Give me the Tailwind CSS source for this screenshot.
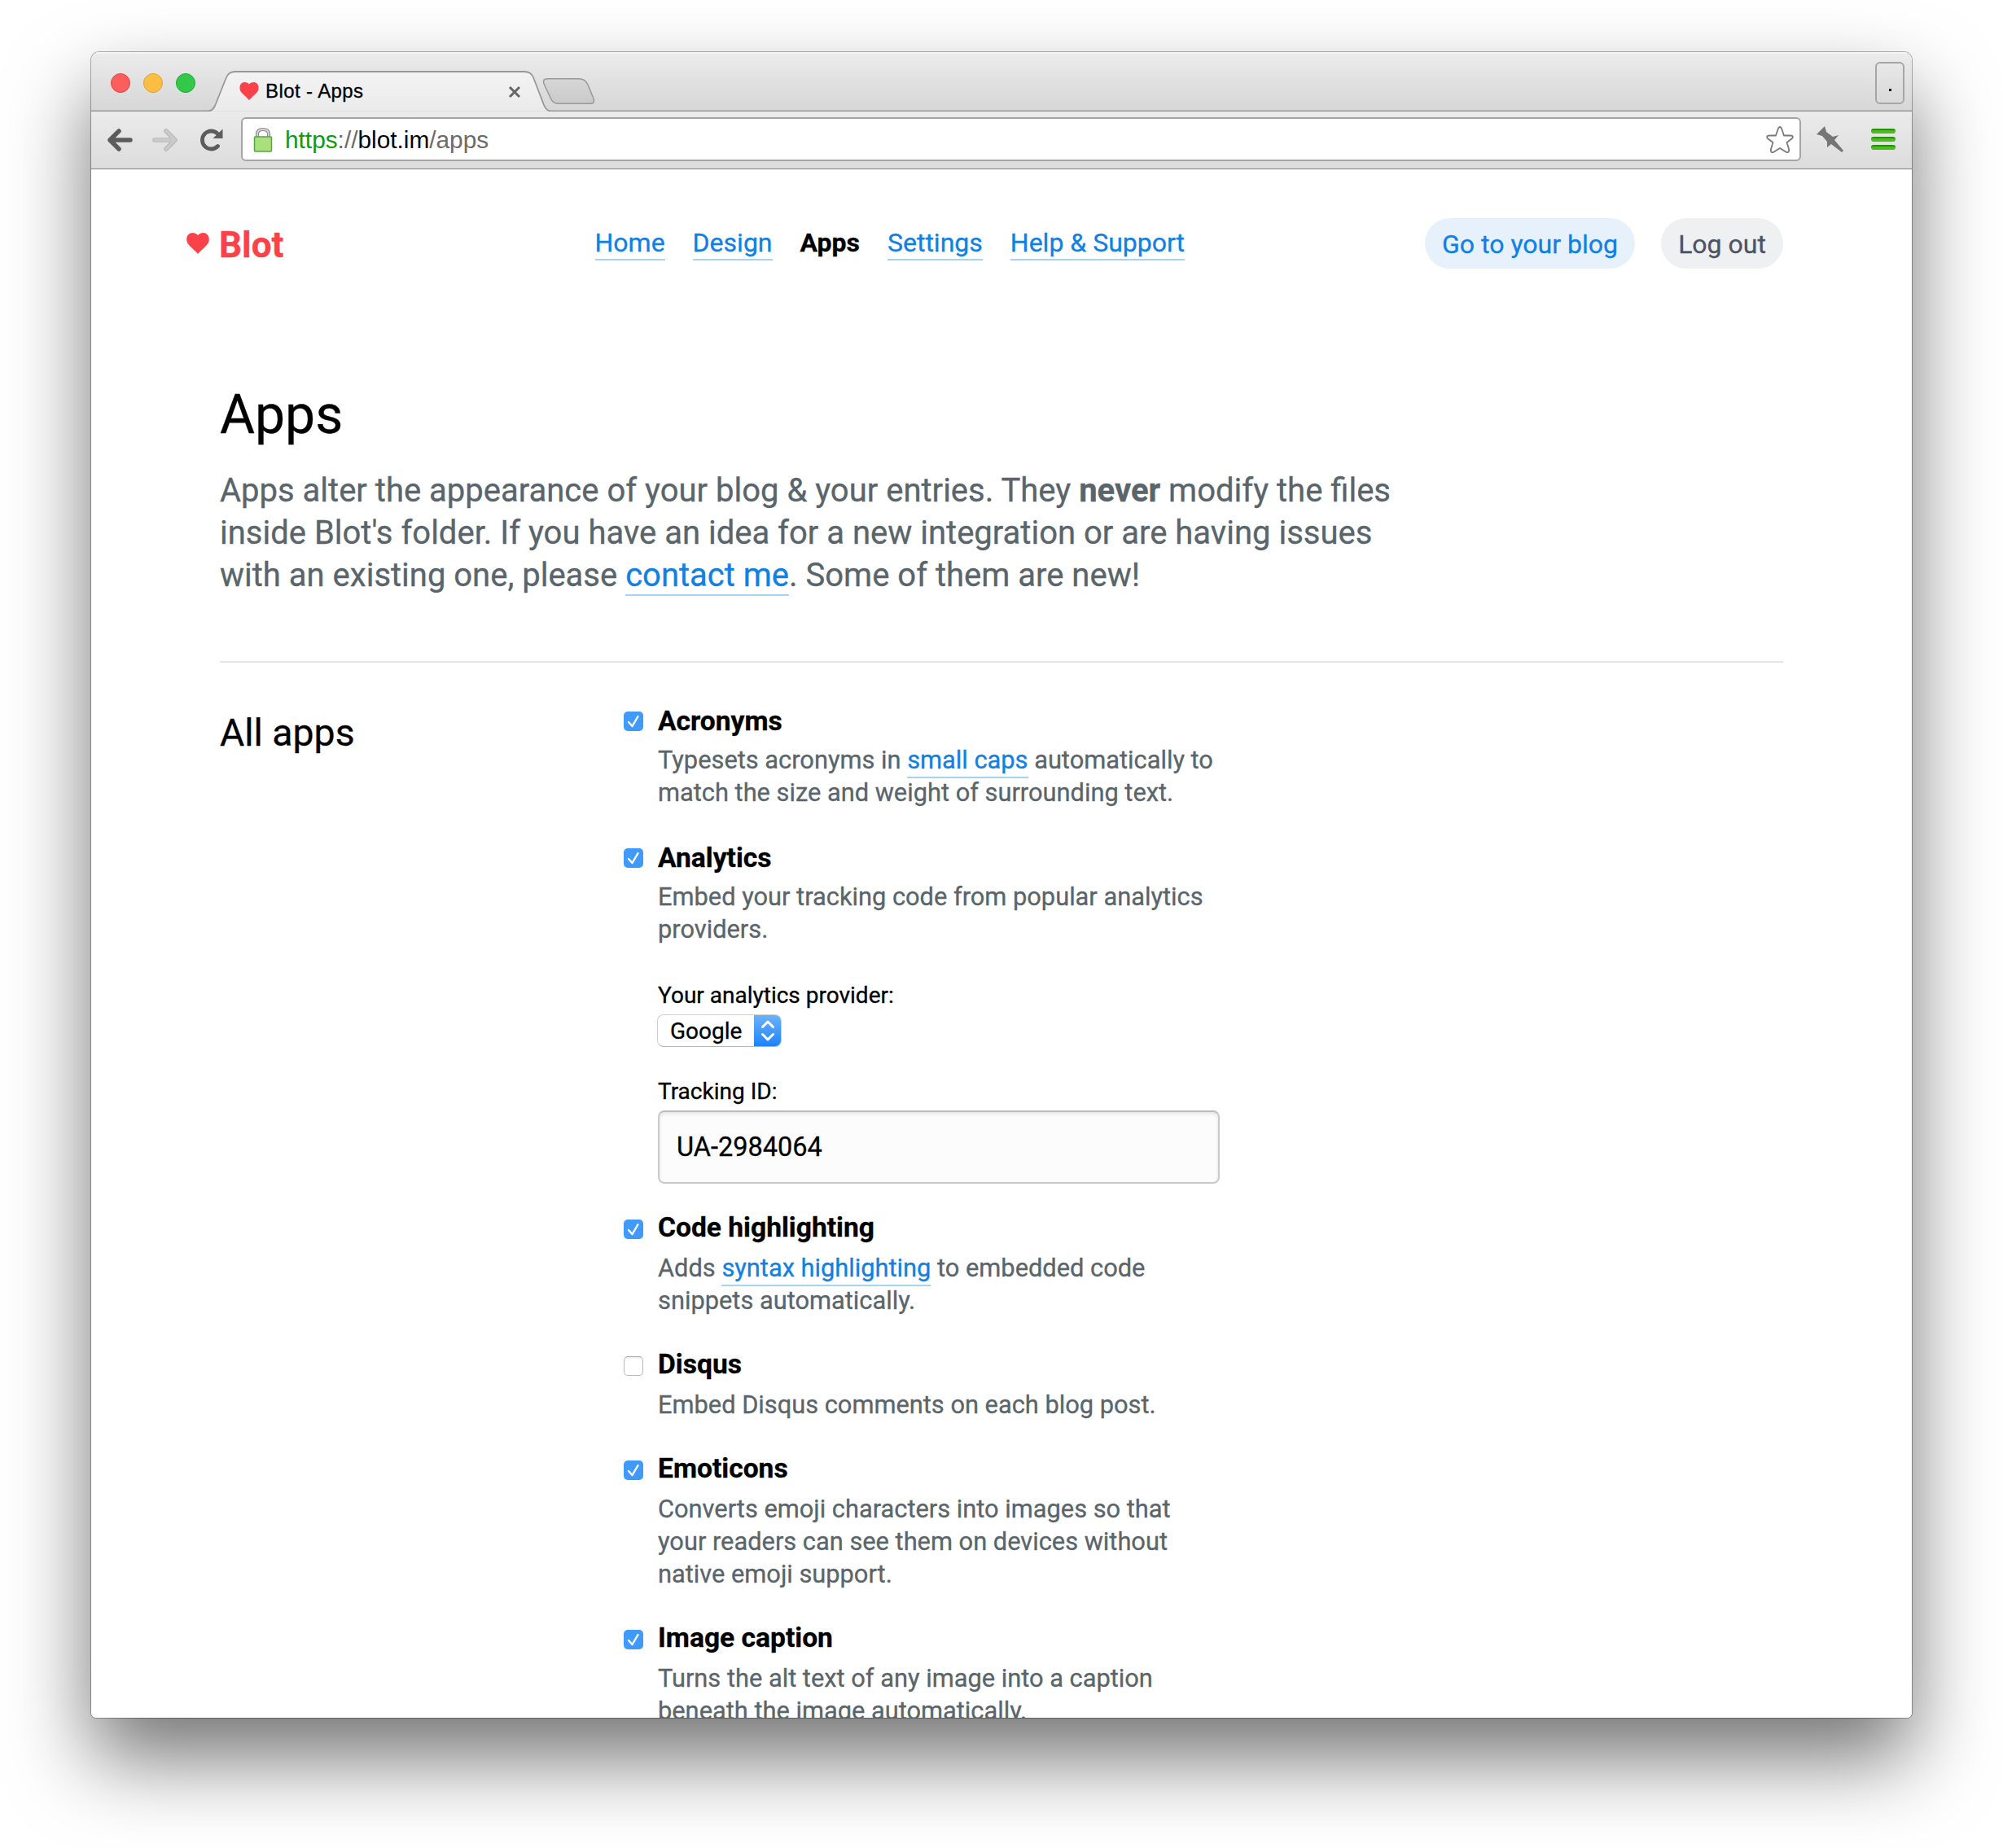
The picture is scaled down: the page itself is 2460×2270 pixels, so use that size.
<!DOCTYPE html>
<html lang="en">
<head>
<meta charset="utf-8">
<title>Blot - Apps</title>
<script src="https://cdn.jsdelivr.net/npm/@tailwindcss/browser@4"></script>
</head>
<body class="w-[2460px] h-[2270px] overflow-hidden bg-white px-28 pt-16 font-[Roboto,sans-serif] text-black">
<svg class="hidden">
  <symbol id="check" viewBox="0 0 24 24"><path d="M6 13 L10.500 18 L17.500 6" fill="none" stroke="#fff" stroke-width="2.400" stroke-linecap="round" stroke-linejoin="round"/></symbol>
  <symbol id="heart" viewBox="0 0 28 26"><path d="M14 26 C12 22.500 1.500 15.500 0.500 10.500 C-0.800 4 3 0 7.500 0 C10.500 0 13 1.500 14 3 C15 1.500 17.500 0 20.500 0 C25 0 28.800 4 27.500 10.500 C26.500 15.500 16 22.500 14 26 Z" fill="#fa4248"/></symbol>
</svg>
<div class="w-[2236px] h-[2046px] rounded-t-[10px] rounded-b-md shadow-[0_0_0_1px_rgba(0,0,0,0.3),0_50px_100px_rgba(0,0,0,0.55)]">
<div class="flex h-full flex-col overflow-hidden rounded-t-[10px] rounded-b-md bg-white">

  <!-- tab strip -->
  <div class="relative flex h-[73px] shrink-0 bg-linear-to-b from-[#ececec] to-[#d6d6d6] shadow-[inset_0_2px_0_#f4f4f4]">
    <svg class="absolute left-0 top-0" width="2236" height="73" viewBox="0 0 2236 73" fill="none">
      <defs><linearGradient id="tab" x1="0" y1="0" x2="0" y2="1"><stop offset="0" stop-color="#f3f3f3"/><stop offset="1" stop-color="#ebebeb"/></linearGradient>
      <linearGradient id="nt" x1="0" y1="0" x2="0" y2="1"><stop offset="0" stop-color="#d6d6d6"/><stop offset="1" stop-color="#cacaca"/></linearGradient></defs>
      <path d="M0 72.500 H143 Q149 72.500 152 66 L166 31 Q169 24 177 24 H532 Q540 24 543 31 L556 65 Q559 72.500 565 72.500 H2236" fill="url(#tab)" stroke="#989898" stroke-width="1.800"/>
      <path d="M560 32.700 H599 Q607 32.700 610 40 L617 57 Q619 63.300 613 63.300 H573 Q567 63.300 564 56 L556 39 Q554 32.700 560 32.700 Z" fill="url(#nt)" stroke="#989898" stroke-width="1.500"/>
    </svg>
    <div class="relative flex h-full w-full items-start">
      <div class="flex gap-4 pl-6 pt-[26px]">
        <span class="size-6 rounded-full border border-[#e0443e] bg-[#fc5f5b]"></span>
        <span class="size-6 rounded-full border border-[#dea034] bg-[#fdbe41]"></span>
        <span class="size-6 rounded-full border border-[#1aab29] bg-[#34c84a]"></span>
      </div>
      <svg class="ml-[54px] mt-[37px] h-[22px] w-6" viewBox="0 0 28 26"><use href="#heart"/></svg>
      <span class="ml-2 mt-[34px] font-['Liberation_Sans',sans-serif] text-[24px] leading-7 tracking-[0.4px] [-webkit-text-stroke:0.3px]">Blot - Apps</span>
      <svg class="ml-auto mr-[1708px] mt-[41px] shrink-0" width="16" height="16" viewBox="0 0 16 16"><path d="M2 2 L14 14 M14 2 L2 14" stroke="#666" stroke-width="3"/></svg>
      <span class="absolute right-[9px] top-3 flex h-[52px] w-9 justify-center rounded-md border-2 border-[#a6a6a6]"><i class="mt-[31px] size-[3px] bg-black"></i></span>
    </div>
  </div>

  <!-- toolbar -->
  <div class="flex h-[71px] shrink-0 items-start border-b border-[#808080] bg-linear-to-b from-[#ebebeb] to-[#dcdcdc] pl-5 pt-[7px]">
    <svg class="mt-[13px]" width="32" height="30" viewBox="0 0 32 30"><path d="M14 4 L3 15 L14 26 M4 15 H28" fill="none" stroke="#5c5c5c" stroke-width="5.500" stroke-linecap="round" stroke-linejoin="round"/></svg>
    <svg class="ml-[22px] mt-[13px]" width="32" height="30" viewBox="0 0 32 30"><path d="M18 4 L29 15 L18 26 M4 15 H28" fill="none" stroke="#b4b4b4" stroke-width="5.500" stroke-linecap="round" stroke-linejoin="round"/><path d="M18 4 L29 15 L18 26 M4 15 H28" fill="none" stroke="#cacaca" stroke-width="3.800" stroke-linecap="round" stroke-linejoin="round"/></svg>
    <svg class="ml-7 mt-[13px]" width="30" height="30" viewBox="0 0 30 30"><path d="M21 7 A11 11 0 1 0 21.500 22.500" fill="none" stroke="#5c5c5c" stroke-width="4.800" stroke-linecap="round"/><path d="M27.500 1.500 V13 H15.500 Z" fill="#5c5c5c"/></svg>
    <div class="ml-5 flex h-[54px] w-[1916px] items-start rounded-md border-2 border-[#a5a5a5] bg-white">
      <svg class="ml-[13px] mt-[11px]" width="24" height="32" viewBox="0 0 24 32"><path d="M5 12 V8 Q5 2 12 2 Q19 2 19 8 V12" fill="none" stroke="#8a8a8a" stroke-width="4"/><path d="M5 12 V8 Q5 2 12 2 Q19 2 19 8 V12" fill="none" stroke="#d8d8d8" stroke-width="1.800"/><rect x="1.500" y="11" width="21" height="18" rx="1" fill="#a9e07c" stroke="#55a545" stroke-width="1.500"/></svg>
      <span class="ml-[15px] mt-[10px] font-['Liberation_Sans',sans-serif] text-[29.800px] leading-8 text-[#6b6b6b]"><span class="text-[#0f9a0f]">https</span>://<span class="text-black">blot.im</span>/apps</span>
      <svg class="ml-auto mr-[5px] mt-[7px]" width="38" height="38" viewBox="0 0 38 38"><path d="M19 3 Q20.500 3 21.500 6 L24 13.500 H32 Q37 14 33.500 17.500 L27.500 22 L30 30 Q31 35 27 34 L19 29 L11 34 Q7 35 8 30 L10.500 22 L4.500 17.500 Q1 14 6 13.500 H14 L16.500 6 Q17.500 3 19 3 Z" fill="#fff" stroke="#7a7a7a" stroke-width="1.800" stroke-linejoin="round"/></svg>
    </div>
    <svg class="ml-[19px] mt-[10px]" width="34" height="34" viewBox="0 0 34 34"><path d="M0 11 L10 1 L12 8 L20 14 L27 12 L22 18 L33 31 L31 33 L18 23 L13 27 L13 20 L7 13 Z" fill="#757575"/></svg>
    <div class="ml-[33px] mt-3.5 flex w-[30px] flex-col gap-1">
      <span class="h-1.5 rounded-sm border-t-2 border-[#258f14] bg-[#4dbb1c]"></span>
      <span class="h-1.5 rounded-sm border-t-2 border-[#258f14] bg-[#4dbb1c]"></span>
      <span class="h-1.5 rounded-sm border-t-2 border-[#258f14] bg-[#4dbb1c]"></span>
    </div>
  </div>

  <!-- page -->
  <div class="min-h-0 flex-1 overflow-hidden px-[158px] [-webkit-text-stroke:0.3px]">
    <header class="-ml-[41px] flex h-[62px] mt-[60px] items-start text-[32px] leading-10">
      <a class="flex w-[501.500px] font-bold text-[#fa4248]"><svg class="mt-[18px] h-[26px] w-7" viewBox="0 0 28 26"><use href="#heart"/></svg><span class="ml-3 mt-[9px] text-[44px] leading-[48px]">Blot</span></a>
      <nav class="mt-3 flex gap-[34px] text-[#1080e2]">
        <a class="h-10 border-b-2 border-[#a6d3ee] leading-9">Home</a>
        <a class="h-10 border-b-2 border-[#a6d3ee] leading-9">Design</a>
        <a class="h-10 font-bold leading-9 text-black">Apps</a>
        <a class="h-10 border-b-2 border-[#a6d3ee] leading-9">Settings</a>
        <a class="h-10 border-b-2 border-[#a6d3ee] leading-9">Help &amp; Support</a>
      </nav>
      <div class="ml-auto flex gap-8">
        <a class="h-[62px] w-[258px] rounded-full bg-[#e6f1fc] pt-px text-center leading-[62px] text-[#1080e2]">Go to your blog</a>
        <a class="h-[62px] w-[150px] rounded-full bg-[#eff0f2] pt-px text-center leading-[62px] text-[#4d5361]">Log out</a>
      </div>
    </header>

    <h1 class="mt-[140px] text-[66px] leading-[80px]">Apps</h1>
    <p class="mt-[27px] text-[40px] leading-[52px] text-[#59656b]">Apps alter the appearance of your blog &amp; your entries. They <b>never</b> modify the files<br>inside Blot's folder. If you have an idea for a new integration or are having issues<br>with an existing one, please <a class="border-b-2 border-[#a6d3ee] text-[#1080e2]">contact me</a>. Some of them are new!</p>

    <section class="mt-[79px] flex border-t-2 border-[#e4e4e4]">
      <h2 class="w-[496px] pt-[56px] text-[46.400px] leading-[60px]">All apps</h2>
      <div class="flex flex-col pt-14 text-[30.800px] leading-10 text-[#59656b]">
        <div class="flex h-[168px] gap-[18px]">
          <svg class="mt-1 size-6 rounded-[5px] bg-[#409afb]"><use href="#check"/></svg>
          <div><h3 class="h-11 text-[33.600px] font-bold leading-8 text-black">Acronyms</h3><p>Typesets acronyms in <a class="border-b-2 border-[#a6d3ee] pb-0.5 text-[#1080e2]">small caps</a> automatically to<br>match the size and weight of surrounding text.</p></div>
        </div>
        <div class="flex h-[454px] gap-[18px]">
          <svg class="mt-1 size-6 rounded-[5px] bg-[#409afb]"><use href="#check"/></svg>
          <div><h3 class="h-11 text-[33.600px] font-bold leading-8 text-black">Analytics</h3><p>Embed your tracking code from popular analytics<br>providers.</p>
            <div class="mt-[43px] text-[28px] leading-9 text-black">Your analytics provider:</div>
            <div class="-ml-px mt-[5px] flex h-10 w-[153px] overflow-hidden rounded-lg border border-[#cfcfcf] border-b-[#b5b5b5] text-[28px] leading-[39px] text-black"><span class="w-[118px] pl-[15px]">Google</span>
              <svg class="-my-px -mr-px h-10 w-[34px] bg-linear-to-b from-[#6bb3fa] to-[#1480ff]" viewBox="0 0 34 40" fill="none" stroke="#fff" stroke-width="3" stroke-linecap="round" stroke-linejoin="round"><path d="M10.500 15.500 L17 9 L23.500 15.500 M10.500 24.500 L17 31 L23.500 24.500"/></svg></div>
            <div class="mt-[37px] text-[28px] leading-9 text-black">Tracking ID:</div>
            <div class="mt-[5px] h-[90px] w-[690px] rounded-lg border-2 border-[#cacaca] border-t-[#bcbcbc] bg-[#fcfcfc] pl-[21px] text-[32.500px] leading-[86px] text-black shadow-[inset_0_2px_4px_rgba(0,0,0,0.1)]">UA-2984064</div>
          </div>
        </div>
        <div class="flex h-[168px] gap-[18px]">
          <svg class="mt-1.5 size-6 rounded-[5px] bg-[#409afb]"><use href="#check"/></svg>
          <div><h3 class="h-[46px] text-[33.600px] font-bold leading-8 text-black">Code highlighting</h3><p>Adds <a class="border-b-2 border-[#a6d3ee] pb-0.5 text-[#1080e2]">syntax highlighting</a> to embedded code<br>snippets automatically.</p></div>
        </div>
        <div class="flex h-32 gap-[18px]">
          <span class="mt-1.5 size-6 rounded-[5px] border border-[#bbb] border-t-[#a5a5a5] bg-white shadow-[inset_0_2px_2px_rgba(0,0,0,0.06)]"></span>
          <div><h3 class="h-[46px] text-[33.600px] font-bold leading-8 text-black">Disqus</h3><p>Embed Disqus comments on each blog post.</p></div>
        </div>
        <div class="flex h-[208px] gap-[18px]">
          <svg class="mt-1.5 size-6 rounded-[5px] bg-[#409afb]"><use href="#check"/></svg>
          <div><h3 class="h-[46px] text-[33.600px] font-bold leading-8 text-black">Emoticons</h3><p>Converts emoji characters into images so that<br>your readers can see them on devices without<br>native emoji support.</p></div>
        </div>
        <div class="flex h-[168px] gap-[18px]">
          <svg class="mt-1.5 size-6 rounded-[5px] bg-[#409afb]"><use href="#check"/></svg>
          <div><h3 class="h-[46px] text-[33.600px] font-bold leading-8 text-black">Image caption</h3><p>Turns the alt text of any image into a caption<br>beneath the image automatically.</p></div>
        </div>
      </div>
    </section>
  </div>
</div>
</div>
</body>
</html>
